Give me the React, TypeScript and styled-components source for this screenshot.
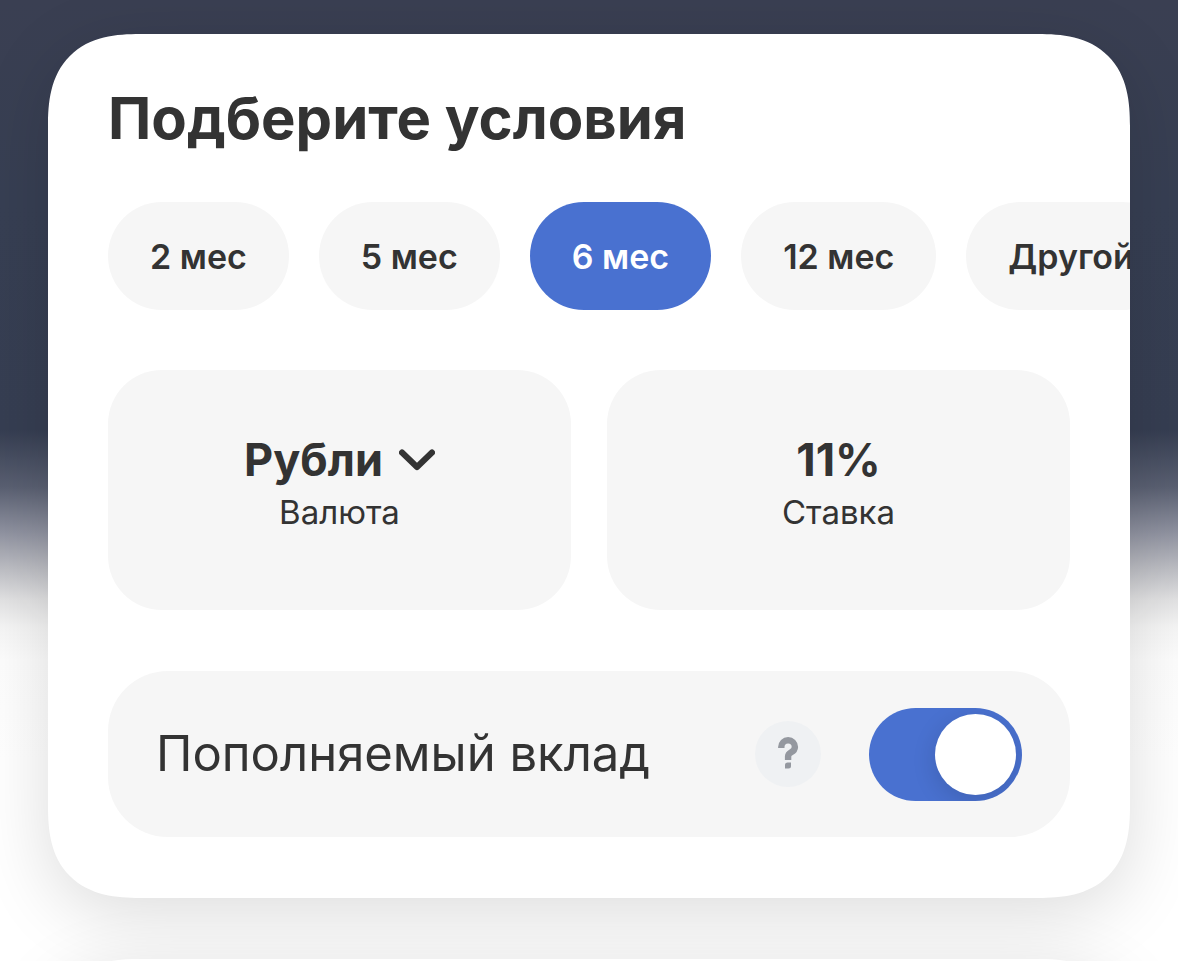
import { useState } from "react";
import styled, { createGlobalStyle } from "styled-components";

const GlobalStyle = createGlobalStyle`
  *, *::before, *::after { box-sizing: border-box; }
  body {
    margin: 0;
    color: #333;
    font-family: Inter, "Liberation Sans", sans-serif;
    -webkit-font-smoothing: antialiased;
  }
  button, select { font: inherit; color: inherit; }
`;

const Page = styled.main`
  height: 100vh;
  overflow: hidden auto;
  scrollbar-width: none;
  display: flex;
  flex-direction: column;
  gap: 61px;
  padding: 34px 48px 0;
  background: linear-gradient(
    #3a3f52 0,
    #373f53 200px,
    #363e52 430px,
    #5a6072 487px,
    #8f92a0 532px,
    #bbbcc2 567px,
    #e2e2e3 600px,
    #f5f5f5 627px,
    #fdfdfd 660px,
    #fff 760px
  );
`;

const Card = styled.section`
  flex: none;
  display: flex;
  flex-direction: column;
  padding: 48px 0 61px;
  border-radius: 72px;
  background: #fff;
  box-shadow: 0 16px 72px rgba(0, 0, 0, 0.14);
  overflow: hidden;

  @supports (corner-shape: superellipse(1.35)) {
    border-radius: 92px;
    corner-shape: superellipse(1.35);
  }
`;

const NextCard = styled(Card)`
  min-height: 240px;
`;

const Title = styled.h2`
  margin: 0 60px;
  font-size: 58px;
  line-height: 72px;
  font-weight: 700;
`;

const Terms = styled.div`
  display: flex;
  gap: 30px;
  margin-top: 48px;
  padding: 0 60px;
  overflow: auto hidden;
  scrollbar-width: none;
`;

const Chip = styled.button<{ $active: boolean }>`
  flex: none;
  height: 108px;
  padding: 0 42px;
  border: 0;
  border-radius: 54px;
  background: ${(p) => (p.$active ? "#4971d0" : "#f6f6f6")};
  color: ${(p) => (p.$active ? "#fff" : "#333")};
  font-size: 34px;
  font-weight: 600;
  white-space: nowrap;
  cursor: pointer;
`;

const Tiles = styled.div`
  display: grid;
  grid-template-columns: 1fr 1fr;
  gap: 36px;
  margin: 60px 60px 0;
`;

const Tile = styled.div`
  display: flex;
  flex-direction: column;
  align-items: center;
  justify-content: center;
  min-height: 240px;
  padding-bottom: 12px;
  border-radius: 54px;
  background: #f6f6f6;
`;

const TileValue = styled.div`
  display: flex;
  align-items: center;
  gap: 16px;
  font-size: 45px;
  line-height: 56px;
  font-weight: 700;
`;

const CurrencySelect = styled.select`
  appearance: none;
  field-sizing: content;
  padding: 0;
  border: 0;
  background: none;
  cursor: pointer;
`;

const Chevron = styled.svg`
  width: 36px;
  height: 22px;
  fill: none;
  stroke: #333;
  stroke-width: 6;
  stroke-linecap: round;
  stroke-linejoin: round;
`;

const TileLabel = styled.label`
  font-size: 33px;
  line-height: 48px;
`;

const OptionRow = styled.div`
  display: flex;
  align-items: center;
  gap: 48px;
  min-height: 166px;
  margin: 61px 60px 0;
  padding: 0 48px;
  border-radius: 60px;
  background: #f6f6f6;
`;

const OptionLabel = styled.label`
  flex: 1;
  font-size: 49px;
  line-height: 60px;
`;

const HelpButton = styled.button`
  flex: none;
  width: 66px;
  height: 66px;
  padding: 0;
  border: 0;
  border-radius: 50%;
  background: #eff1f3;
  cursor: pointer;

  svg {
    display: block;
    fill: none;
    stroke: #94989f;
    stroke-width: 6.4;
  }
`;

const Switch = styled.input`
  appearance: none;
  flex: none;
  display: flex;
  align-items: center;
  width: 153px;
  height: 93px;
  margin: 0;
  padding: 0 6px;
  border-radius: 47px;
  background: #c9ccd2;
  overflow: hidden;
  cursor: pointer;

  &::before {
    content: "";
    width: 81px;
    height: 81px;
    border-radius: 50%;
    background: #fff;
    box-shadow: 0 6px 24px rgba(0, 0, 0, 0.14);
  }

  &:checked {
    justify-content: flex-end;
    background: #4971d0;
  }
`;

const terms = ["2 мес", "5 мес", "6 мес", "12 мес", "Другой"];

export default function App() {
  const [term, setTerm] = useState("6 мес");
  const [refillable, setRefillable] = useState(true);

  return (
    <>
      <GlobalStyle />
      <Page>
        <Card>
          <Title>Подберите условия</Title>
          <Terms>
            {terms.map((t) => (
              <Chip key={t} type="button" $active={t === term} aria-pressed={t === term} onClick={() => setTerm(t)}>
                {t}
              </Chip>
            ))}
          </Terms>
          <Tiles>
            <Tile>
              <TileValue>
                <CurrencySelect id="currency">
                  <option>Рубли</option>
                </CurrencySelect>
                <Chevron viewBox="0 0 36 22" aria-hidden="true">
                  <path d="M3 3.5 18 18 33 3.5" />
                </Chevron>
              </TileValue>
              <TileLabel htmlFor="currency">Валюта</TileLabel>
            </Tile>
            <Tile>
              <TileValue as="output" id="rate">11%</TileValue>
              <TileLabel htmlFor="rate">Ставка</TileLabel>
            </Tile>
          </Tiles>
          <OptionRow>
            <OptionLabel htmlFor="refillable">Пополняемый вклад</OptionLabel>
            <HelpButton type="button" aria-label="Подсказка">
              <svg viewBox="0 0 66 66" aria-hidden="true">
                <path d="M26.3 27V26a6.8 6.8 0 0 1 13.6 0c0 6-6.8 4.6-6.8 9.4V39" />
                <path d="M30 47.5V44q0-2.5 2.5-2.5H36V45q0 2.5-2.5 2.5Z" fill="#94989f" stroke="none" />
              </svg>
            </HelpButton>
            <Switch
              id="refillable"
              type="checkbox"
              role="switch"
              checked={refillable}
              onChange={(e) => setRefillable(e.target.checked)}
            />
          </OptionRow>
        </Card>
        <NextCard />
      </Page>
    </>
  );
}
